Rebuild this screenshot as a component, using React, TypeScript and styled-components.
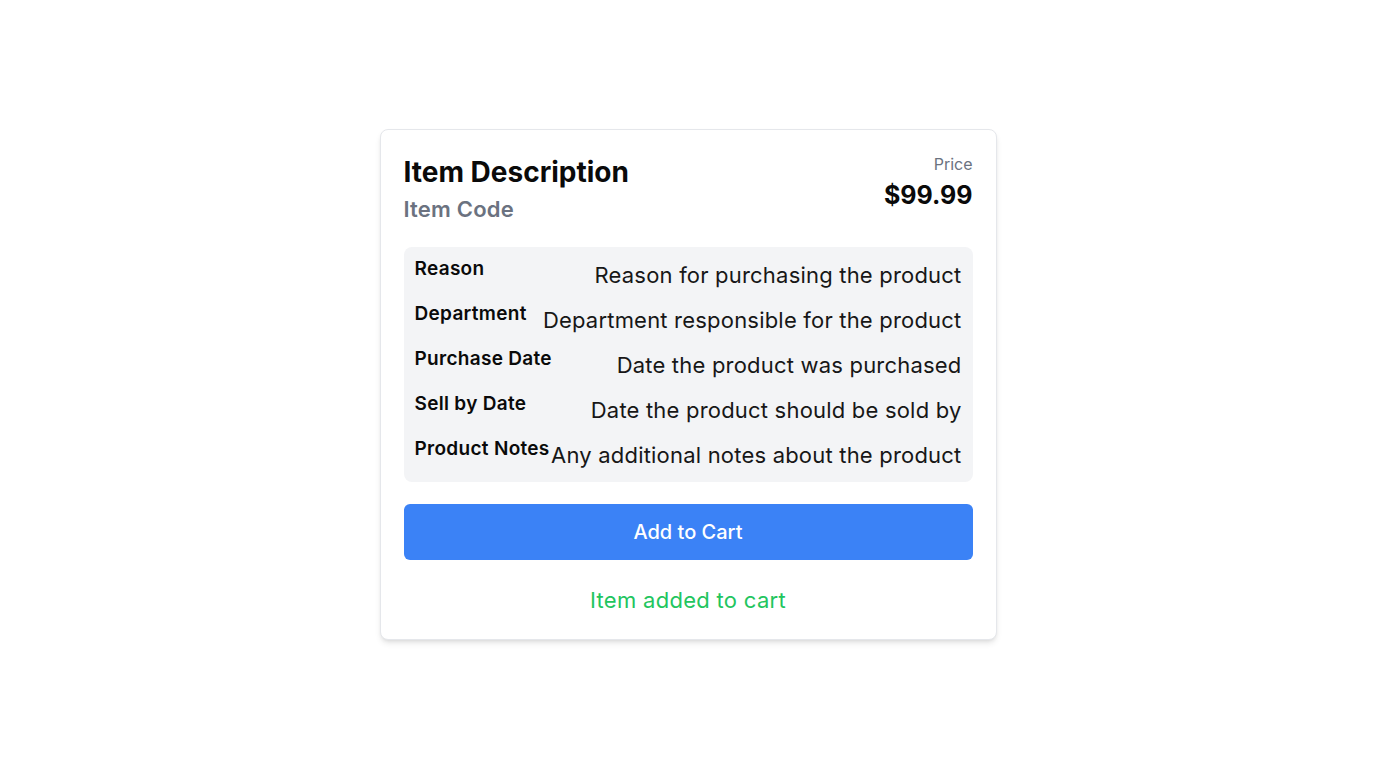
import React from "react";
import styled, { createGlobalStyle } from "styled-components";

const Global = createGlobalStyle`
  html, body { margin: 0; padding: 0; background: #ffffff; }
  body { font-family: Inter, "Noto Sans", sans-serif; color: #111827; }
`;

const Page = styled.div`
  min-height: 100vh;
  display: flex;
  align-items: center;
  justify-content: center;
`;

const Card = styled.div`
  box-sizing: border-box;
  width: 617px;
  padding: 25px 23px 25px 23px;
  background: #fff;
  border: 1px solid #e5e7eb;
  border-radius: 8px;
  box-shadow: 0 4px 6px -1px rgba(0, 0, 0, 0.1), 0 2px 4px -2px rgba(0, 0, 0, 0.1);
  display: flex;
  flex-direction: column;
`;

const Header = styled.div`
  display: flex;
  justify-content: space-between;
  align-items: flex-start;
`;

const TitleBlock = styled.div`
  display: flex;
  flex-direction: column;
`;

const Title = styled.h2`
  margin: 0;
  font-size: 28px;
  line-height: 34px;
  font-weight: 700;
  color: #0a0a0a;
`;

const Code = styled.p`
  margin: 6px 0 0;
  font-size: 22px;
  line-height: 28px;
  font-weight: 600;
  letter-spacing: 0.2px;
  color: #6b7280;
`;

const PriceBlock = styled.div`
  display: flex;
  flex-direction: column;
  align-items: flex-end;
  margin-top: -1px;
`;

const PriceLabel = styled.span`
  font-size: 16px;
  line-height: 20px;
  color: #6b7280;
`;

const PriceValue = styled.span`
  margin-top: 5px;
  font-size: 25px;
  line-height: 32px;
  font-weight: 700;
  color: #0a0a0a;
`;

const Details = styled.div`
  margin-top: 24px;
  background: #f3f4f6;
  border-radius: 8px;
  padding: 12px 11px 11px 11px;
  display: flex;
  flex-direction: column;
  gap: 13px;
`;

const Row = styled.div`
  display: flex;
  justify-content: space-between;
  align-items: flex-start;
  gap: 1px;
`;

const Label = styled.span`
  font-size: 19px;
  line-height: 20px;
  font-weight: 600;
  letter-spacing: 0.3px;
  color: #0a0a0a;
  white-space: nowrap;
`;

const Value = styled.span`
  font-size: 22px;
  line-height: 32px;
  letter-spacing: 0.2px;
  color: #171717;
  text-align: right;
  white-space: nowrap;
`;

const Button = styled.button`
  margin-top: 22px;
  height: 56px;
  border: none;
  border-radius: 6px;
  background: #3b82f6;
  color: #fff;
  font-family: Inter, "Noto Sans", sans-serif;
  font-size: 20px;
  font-weight: 500;
  cursor: pointer;
`;

const Status = styled.p`
  margin: 26px 0 0;
  text-align: center;
  font-size: 22px;
  line-height: 28px;
  letter-spacing: 0.3px;
  color: #22c55e;
`;

const rows = [
  ["Reason", "Reason for purchasing the product"],
  ["Department", "Department responsible for the product"],
  ["Purchase Date", "Date the product was purchased"],
  ["Sell by Date", "Date the product should be sold by"],
  ["Product Notes", "Any additional notes about the product"],
];

export default function App() {
  return (
    <Page>
      <Global />
      <Card>
        <Header>
          <TitleBlock>
            <Title>Item Description</Title>
            <Code>Item Code</Code>
          </TitleBlock>
          <PriceBlock>
            <PriceLabel>Price</PriceLabel>
            <PriceValue>$99.99</PriceValue>
          </PriceBlock>
        </Header>
        <Details>
          {rows.map(([l, v]) => (
            <Row key={l}>
              <Label>{l}</Label>
              <Value>{v}</Value>
            </Row>
          ))}
        </Details>
        <Button>Add to Cart</Button>
        <Status>Item added to cart</Status>
      </Card>
    </Page>
  );
}
